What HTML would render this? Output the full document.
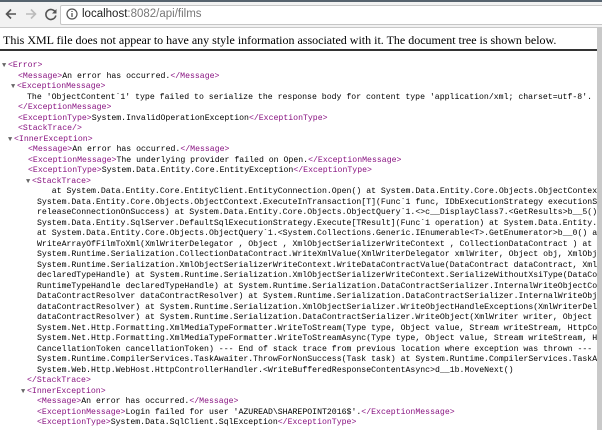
<!DOCTYPE html>
<html><head><style>
body{margin:0;width:602px;height:430px;overflow:hidden;background:#fff;position:relative;font-family:"Liberation Sans",sans-serif}
#top{position:absolute;left:0;top:0;width:602px;height:2px;background:#56636e}
#bar{position:absolute;left:0;top:2px;width:602px;height:25px;background:#f2f2f2;border-bottom:1px solid #c8c8c8}
#addr{position:absolute;left:60px;top:3px;width:560px;height:18px;background:#fff;border:1px solid #c6c6c6;border-radius:2px}
#url{position:absolute;left:82px;top:6px;font-size:11.5px;color:#777}
#url b{font-weight:normal;color:#222}
#msg{position:absolute;left:3px;top:33px;font-family:"Liberation Serif",serif;font-size:12px;color:#000;white-space:nowrap}
#rule{position:absolute;left:0;top:49px;width:598px;height:2px;background:#333}
#clip{position:absolute;left:0;top:61px;width:597px;height:369px;overflow:hidden;font-family:"Liberation Mono",monospace;font-size:8.2px;line-height:10.5px;color:#000}
#clip div{position:relative;height:10.5px;white-space:pre}
.t{color:#881280}
.tri{position:absolute;font-size:7px;color:#666;margin-left:-6px}
#sb{position:absolute;right:0;top:28px;width:5px;height:402px;background:#c9c9c9}
</style></head><body>
<div id="top"></div>
<div id="bar">
<svg style="position:absolute;left:4px;top:5px" width="14" height="14" viewBox="0 0 14 14"><path d="M12 7H3M7 2.5L2.5 7 7 11.5" stroke="#555" stroke-width="1.6" fill="none"/></svg>
<svg style="position:absolute;left:24px;top:5px" width="14" height="14" viewBox="0 0 14 14"><path d="M2 7H11M7 2.5L11.5 7 7 11.5" stroke="#bbb" stroke-width="1.6" fill="none"/></svg>
<svg style="position:absolute;left:44px;top:5px" width="14" height="14" viewBox="0 0 14 14"><path d="M11.5 5.5A5 5 0 1 0 11.8 8.5" stroke="#555" stroke-width="1.6" fill="none"/><path d="M12.5 2v4.5H8z" fill="#555"/></svg>
<div id="addr"></div>
<svg style="position:absolute;left:66px;top:6px" width="12" height="12" viewBox="0 0 12 12"><circle cx="6" cy="6" r="5" stroke="#555" stroke-width="1.2" fill="none"/><path d="M6 5v4M6 3v1" stroke="#555" stroke-width="1.3"/></svg>
<div id="url"><b>localhost</b>:8082/api/films</div>
</div>
<div id="msg">This XML file does not appear to have any style information associated with it. The document tree is shown below.</div>
<div id="rule"></div>
<div id="clip">
<div style="left:8px"><span class="tri">▼</span><span class="t">&lt;Error&gt;</span></div>
<div style="left:18px"><span class="t">&lt;Message&gt;</span>An error has occurred.<span class="t">&lt;/Message&gt;</span></div>
<div style="left:17px"><span class="tri">▼</span><span class="t">&lt;ExceptionMessage&gt;</span></div>
<div style="left:27px">The 'ObjectContent`1' type failed to serialize the response body for content type 'application/xml; charset=utf-8'.</div>
<div style="left:18px"><span class="t">&lt;/ExceptionMessage&gt;</span></div>
<div style="left:18px"><span class="t">&lt;ExceptionType&gt;</span>System.InvalidOperationException<span class="t">&lt;/ExceptionType&gt;</span></div>
<div style="left:18px"><span class="t">&lt;StackTrace/&gt;</span></div>
<div style="left:14px"><span class="tri">▼</span><span class="t">&lt;InnerException&gt;</span></div>
<div style="left:28px"><span class="t">&lt;Message&gt;</span>An error has occurred.<span class="t">&lt;/Message&gt;</span></div>
<div style="left:28px"><span class="t">&lt;ExceptionMessage&gt;</span>The underlying provider failed on Open.<span class="t">&lt;/ExceptionMessage&gt;</span></div>
<div style="left:28px"><span class="t">&lt;ExceptionType&gt;</span>System.Data.Entity.Core.EntityException<span class="t">&lt;/ExceptionType&gt;</span></div>
<div style="left:32px"><span class="tri">▼</span><span class="t">&lt;StackTrace&gt;</span></div>
<div style="left:37px">   at System.Data.Entity.Core.EntityClient.EntityConnection.Open() at System.Data.Entity.Core.Objects.ObjectContext.EnsureConnection</div>
<div style="left:37px">System.Data.Entity.Core.Objects.ObjectContext.ExecuteInTransaction[T](Func`1 func, IDbExecutionStrategy executionStrategy</div>
<div style="left:37px">releaseConnectionOnSuccess) at System.Data.Entity.Core.Objects.ObjectQuery`1.&lt;&gt;c__DisplayClass7.&lt;GetResults&gt;b__5()</div>
<div style="left:37px">System.Data.Entity.SqlServer.DefaultSqlExecutionStrategy.Execute[TResult](Func`1 operation) at System.Data.Entity.Core</div>
<div style="left:37px">at System.Data.Entity.Core.Objects.ObjectQuery`1.&lt;System.Collections.Generic.IEnumerable&lt;T&gt;.GetEnumerator&gt;b__0() at</div>
<div style="left:37px">WriteArrayOfFilmToXml(XmlWriterDelegator , Object , XmlObjectSerializerWriteContext , CollectionDataContract ) at</div>
<div style="left:37px">System.Runtime.Serialization.CollectionDataContract.WriteXmlValue(XmlWriterDelegator xmlWriter, Object obj, XmlObjectSer</div>
<div style="left:37px">System.Runtime.Serialization.XmlObjectSerializerWriteContext.WriteDataContractValue(DataContract dataContract, XmlWriter</div>
<div style="left:37px">declaredTypeHandle) at System.Runtime.Serialization.XmlObjectSerializerWriteContext.SerializeWithoutXsiType(DataContract</div>
<div style="left:37px">RuntimeTypeHandle declaredTypeHandle) at System.Runtime.Serialization.DataContractSerializer.InternalWriteObjectContent</div>
<div style="left:37px">DataContractResolver dataContractResolver) at System.Runtime.Serialization.DataContractSerializer.InternalWriteObject</div>
<div style="left:37px">dataContractResolver) at System.Runtime.Serialization.XmlObjectSerializer.WriteObjectHandleExceptions(XmlWriterDelegator</div>
<div style="left:37px">dataContractResolver) at System.Runtime.Serialization.DataContractSerializer.WriteObject(XmlWriter writer, Object graph</div>
<div style="left:37px">System.Net.Http.Formatting.XmlMediaTypeFormatter.WriteToStream(Type type, Object value, Stream writeStream, HttpContent</div>
<div style="left:37px">System.Net.Http.Formatting.XmlMediaTypeFormatter.WriteToStreamAsync(Type type, Object value, Stream writeStream, HttpContent</div>
<div style="left:37px">CancellationToken cancellationToken) --- End of stack trace from previous location where exception was thrown --- at</div>
<div style="left:37px">System.Runtime.CompilerServices.TaskAwaiter.ThrowForNonSuccess(Task task) at System.Runtime.CompilerServices.TaskAwaiter</div>
<div style="left:37px">System.Web.Http.WebHost.HttpControllerHandler.&lt;WriteBufferedResponseContentAsync&gt;d__1b.MoveNext()</div>
<div style="left:27px"><span class="t">&lt;/StackTrace&gt;</span></div>
<div style="left:27px"><span class="tri">▼</span><span class="t">&lt;InnerException&gt;</span></div>
<div style="left:37px"><span class="t">&lt;Message&gt;</span>An error has occurred.<span class="t">&lt;/Message&gt;</span></div>
<div style="left:37px"><span class="t">&lt;ExceptionMessage&gt;</span>Login failed for user 'AZUREAD\SHAREPOINT2016$'.<span class="t">&lt;/ExceptionMessage&gt;</span></div>
<div style="left:37px"><span class="t">&lt;ExceptionType&gt;</span>System.Data.SqlClient.SqlException<span class="t">&lt;/ExceptionType&gt;</span></div>
</div>
<div id="sb"></div>
</body></html>
